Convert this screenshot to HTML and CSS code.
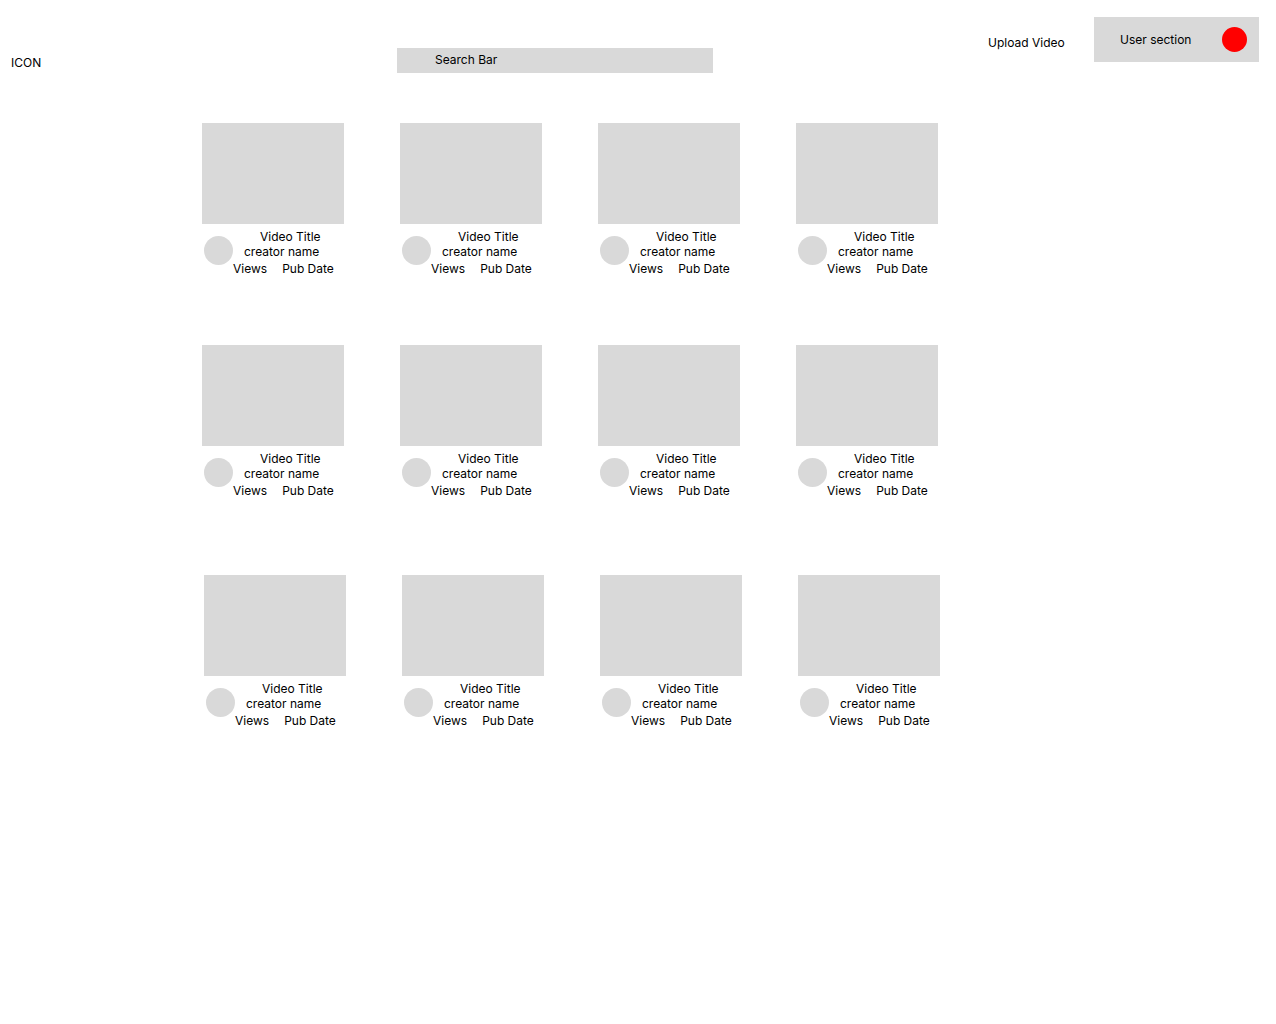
FILE: index.html
```html
<!DOCTYPE html>
<html>
<head>
    <title>Video Home</title>
    <link rel="stylesheet" href="styles.css">
</head>
<body>
    <header class="top-bar">
        <div class="logo">ICON</div>
        <div class="search-bar">Search Bar</div>
        <div class="upload">Upload Video</div>
        <div class="user-section">
            <span>User section</span>
            <span class="user-dot"></span>
        </div>
    </header>

    <main class="feed">
        <div class="row">
            <div class="card"><div class="thumb"></div><div class="meta"><div class="avatar"></div><div class="info"><div class="title">Video Title</div><div class="creator">creator name</div><div class="stats"><span>Views</span><span>Pub Date</span></div></div></div></div>
            <div class="card"><div class="thumb"></div><div class="meta"><div class="avatar"></div><div class="info"><div class="title">Video Title</div><div class="creator">creator name</div><div class="stats"><span>Views</span><span>Pub Date</span></div></div></div></div>
            <div class="card"><div class="thumb"></div><div class="meta"><div class="avatar"></div><div class="info"><div class="title">Video Title</div><div class="creator">creator name</div><div class="stats"><span>Views</span><span>Pub Date</span></div></div></div></div>
            <div class="card"><div class="thumb"></div><div class="meta"><div class="avatar"></div><div class="info"><div class="title">Video Title</div><div class="creator">creator name</div><div class="stats"><span>Views</span><span>Pub Date</span></div></div></div></div>
        </div>
        <div class="row">
            <div class="card"><div class="thumb"></div><div class="meta"><div class="avatar"></div><div class="info"><div class="title">Video Title</div><div class="creator">creator name</div><div class="stats"><span>Views</span><span>Pub Date</span></div></div></div></div>
            <div class="card"><div class="thumb"></div><div class="meta"><div class="avatar"></div><div class="info"><div class="title">Video Title</div><div class="creator">creator name</div><div class="stats"><span>Views</span><span>Pub Date</span></div></div></div></div>
            <div class="card"><div class="thumb"></div><div class="meta"><div class="avatar"></div><div class="info"><div class="title">Video Title</div><div class="creator">creator name</div><div class="stats"><span>Views</span><span>Pub Date</span></div></div></div></div>
            <div class="card"><div class="thumb"></div><div class="meta"><div class="avatar"></div><div class="info"><div class="title">Video Title</div><div class="creator">creator name</div><div class="stats"><span>Views</span><span>Pub Date</span></div></div></div></div>
        </div>
        <div class="row row-last">
            <div class="card"><div class="thumb"></div><div class="meta"><div class="avatar"></div><div class="info"><div class="title">Video Title</div><div class="creator">creator name</div><div class="stats"><span>Views</span><span>Pub Date</span></div></div></div></div>
            <div class="card"><div class="thumb"></div><div class="meta"><div class="avatar"></div><div class="info"><div class="title">Video Title</div><div class="creator">creator name</div><div class="stats"><span>Views</span><span>Pub Date</span></div></div></div></div>
            <div class="card"><div class="thumb"></div><div class="meta"><div class="avatar"></div><div class="info"><div class="title">Video Title</div><div class="creator">creator name</div><div class="stats"><span>Views</span><span>Pub Date</span></div></div></div></div>
            <div class="card"><div class="thumb"></div><div class="meta"><div class="avatar"></div><div class="info"><div class="title">Video Title</div><div class="creator">creator name</div><div class="stats"><span>Views</span><span>Pub Date</span></div></div></div></div>
        </div>
    </main>
</body>
</html>
```

FILE: styles.css
```css
body {
    margin: 0;
    font-family: Inter, "Liberation Sans", sans-serif;
    font-size: 12px;
    color: #000;
    background: #fff;
}
.top-bar {
    display: flex;
    align-items: flex-start;
    height: 73px;
    padding-left: 11px;
}
.logo {
    flex: 0 0 386px;
    margin-top: 55px;
    line-height: 15px;
}
.search-bar {
    width: 316px;
    height: 25px;
    margin-top: 48px;
    padding-left: 38px;
    box-sizing: border-box;
    line-height: 23px;
    background: #d9d9d9;
}
.upload {
    flex: 0 0 106px;
    margin-left: 275px;
    margin-top: 35px;
    line-height: 15px;
}
.user-section {
    display: flex;
    align-items: center;
    justify-content: space-between;
    width: 165px;
    height: 45px;
    margin-top: 17px;
    padding: 0 12px 0 26px;
    box-sizing: border-box;
    background: #d9d9d9;
}
.user-dot {
    width: 25px;
    height: 25px;
    border-radius: 50%;
    background: #ff0000;
}
.feed {
    display: flex;
    flex-direction: column;
    gap: 69px;
    padding: 50px 0 0 202px;
}
.row {
    display: flex;
    gap: 56px;
}
.row-last {
    margin-top: 8px;
    margin-left: 2px;
}
.card {
    width: 142px;
}
.thumb {
    height: 101px;
    background: #d9d9d9;
}
.meta {
    display: flex;
    margin-top: 5px;
    padding-left: 2px;
}
.avatar {
    flex: 0 0 29px;
    height: 29px;
    margin-top: 7px;
    border-radius: 50%;
    background: #d9d9d9;
}
.info {
    line-height: 15px;
}
.title {
    padding-left: 27px;
}
.creator {
    padding-left: 11px;
}
.stats {
    display: flex;
    gap: 15px;
    margin-top: 2px;
}
```
